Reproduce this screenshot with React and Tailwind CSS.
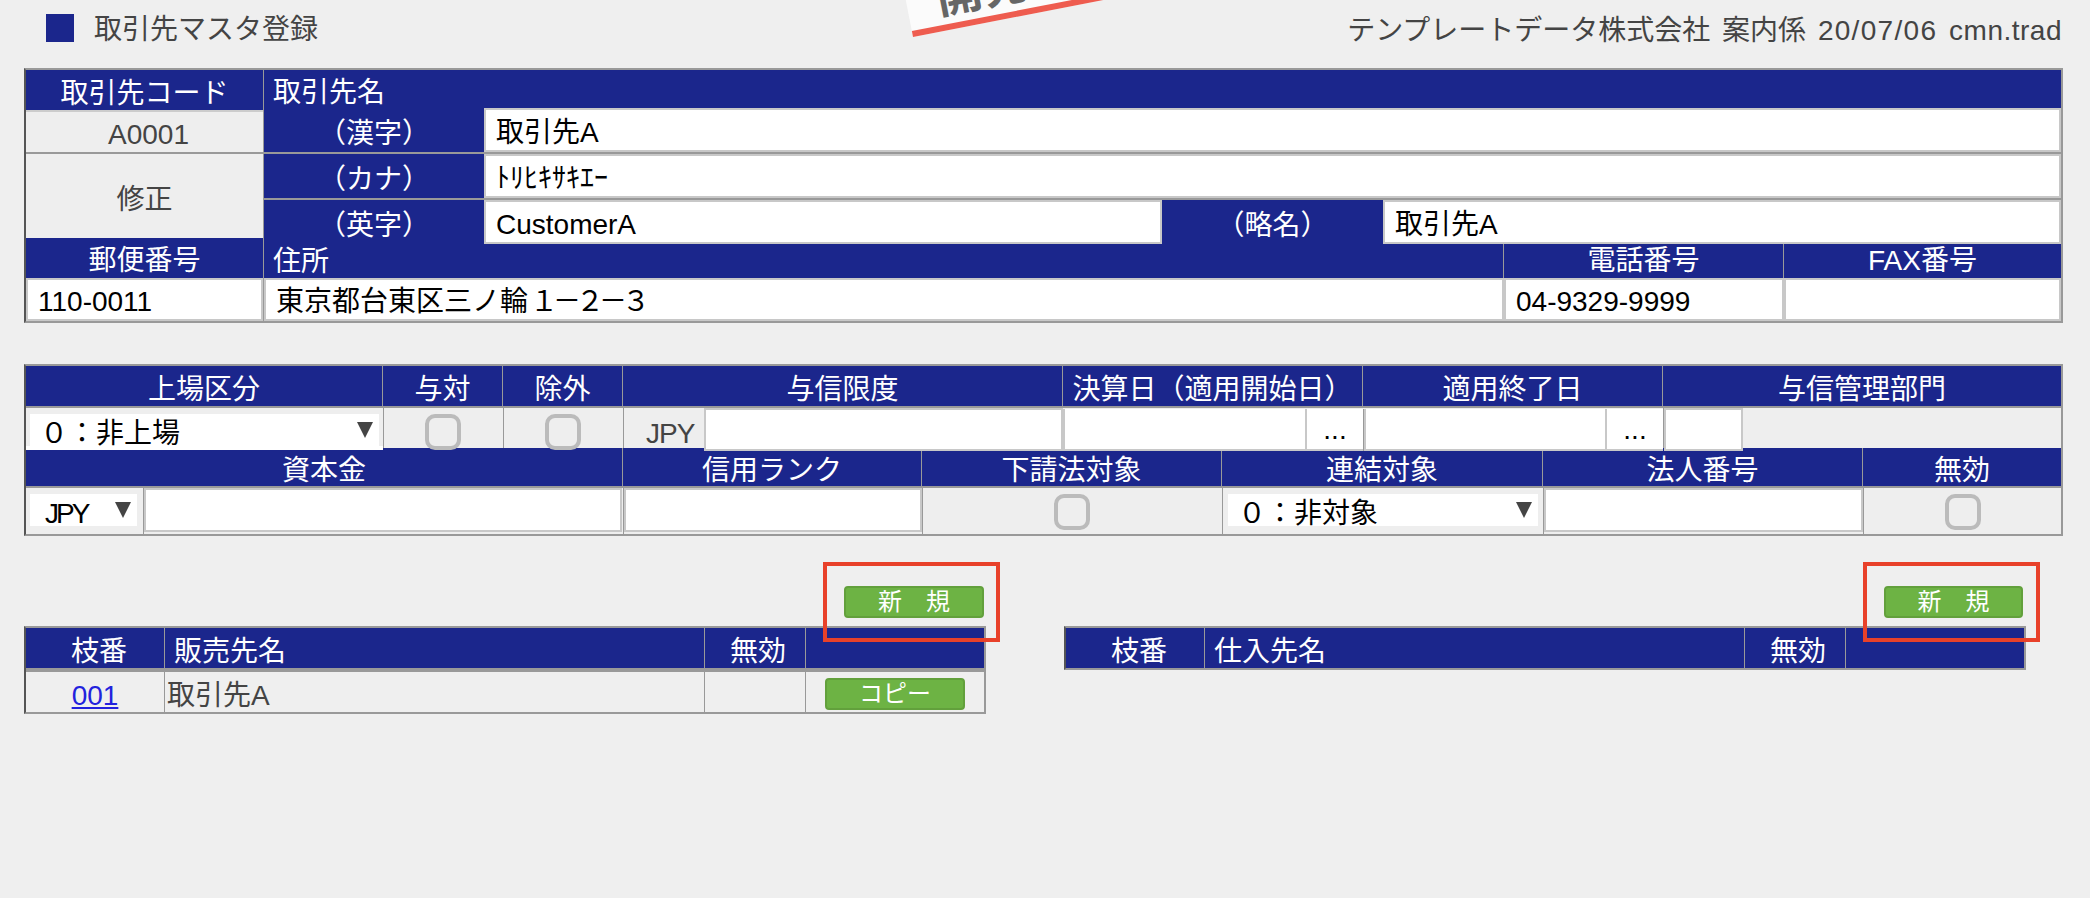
function Head({ className = '', top = 'pt-[7px]', children }) {
    return (
        <div className={`flex items-center justify-center bg-[#1b268c] text-white border-r border-[#999] ${top} ${className}`}>
            {children}
        </div>
    );
}

function Box({ className = '', children }) {
    return (
        <div className={`relative z-10 flex items-center bg-white border-2 border-[#c8c8c8] text-black pl-[10px] pt-[5px] whitespace-nowrap ${className}`}>
            {children}
        </div>
    );
}

function Pick({ className = '', children }) {
    return (
        <div className={`flex items-center justify-between bg-white h-[32px] text-black ${className}`}>
            <span className="whitespace-nowrap pt-[7px]">{children}</span>
            <svg width="16" height="16" viewBox="0 0 16 16" className="mr-[6px] mb-[1px]">
                <polygon points="0,0 16,0 8,16" fill="#444" />
            </svg>
        </div>
    );
}

function Check({ className = '' }) {
    return <div className={`relative z-10 w-[36px] h-[36px] mr-[2px] rounded-[10px] border-4 border-[#bbb] bg-[#eee] ${className}`}></div>;
}

function DateBox({ width }) {
    return (
        <div className={`relative z-10 flex h-[42px] mt-[1px] ${width}`}>
            <div className="flex-1 bg-white border-l-2 border-b-2 border-r-2 border-[#c8c8c8]"></div>
            <div className="w-[56px] flex items-end justify-center bg-white border-b-2 border-[#c8c8c8] text-black text-[28px] leading-none pb-[5px]">...</div>
        </div>
    );
}

function GreenButton({ label, outlined, className = '' }) {
    return (
        <div className={`relative flex items-center justify-center h-[32px] rounded-[4px] bg-[#6db344] border-2 border-[#62a03c] text-white text-[24px] leading-none whitespace-pre ${className}`}>
            {label}
            {/* Red annotation frame */}
            {outlined && <div className="absolute -left-[23px] -top-[26px] w-[177px] h-[80px] border-4 border-[#e8412a]"></div>}
        </div>
    );
}

function App() {
    return (
        <div className="relative w-[2090px] h-[898px] overflow-hidden bg-[#efefef] text-[#444] text-[28px] leading-none font-['Liberation_Sans','Noto_Sans_CJK_JP',sans-serif]">

            {/* Stamp cut off by the top of the page */}
            <div className="absolute left-[913px] -top-[43px] w-[240px] h-[80px] origin-bottom-left -rotate-[11deg] bg-[#fbfbfb] border-b-[6px] border-[#ee5c4f] pl-[30px] pt-[24px] text-[#666] text-[46px] font-bold whitespace-nowrap">
                開発環境
            </div>

            {/* Title bar */}
            <div className="flex items-center justify-between h-[68px] pl-[46px] pr-[28px] pb-[12px]">
                <div className="flex items-center gap-[20px]">
                    <div className="w-[28px] h-[28px] bg-[#1b268c]"></div>
                    <span className="pt-[3px]">取引先マスタ登録</span>
                </div>
                <span className="whitespace-pre mt-[6px] [word-spacing:4px]">テンプレートデータ株式会社 案内係 <span className="tracking-[1.3px]">20/07/06</span> <span className="tracking-[0.5px]">cmn.trad</span></span>
            </div>

            {/* Customer name and address */}
            <div className="flex ml-[24px] w-[2039px] h-[255px] border-t-2 border-b-2 border-l-2 border-r-2 border-t-[#999] border-b-[#999] border-r-[#999] border-l-[#555]">
                <div className="flex flex-col w-[238px] shrink-0 border-r border-[#999]">
                    <div className="flex items-center justify-center h-[40px] pt-[7px] bg-[#1b268c] text-white">取引先コード</div>
                    <div className="flex items-center justify-center h-[44px] pl-[8px] pt-[5px] border-t-2 border-t-[#ccc] border-b-2 border-b-[#999] bg-[#eee]">A0001</div>
                    <div className="flex items-center justify-center h-[84px] pt-[8px] bg-[#eee]">修正</div>
                    <div className="flex items-center justify-center h-[40px] pt-[5px] bg-[#1b268c] text-white">郵便番号</div>
                    <div className="flex items-center flex-1 pl-[10px] pt-[5px] bg-white border-2 border-[#c8c8c8] text-black">110-0011</div>
                </div>
                <div className="flex flex-col flex-1">
                    <div className="flex items-center h-[38px] pl-[9px] pt-[7px] bg-[#1b268c] text-white">取引先名</div>
                    <div className="flex h-[46px] border-b-2 border-[#999]">
                        <Head className="w-[220px] border-r-0">（漢字）</Head>
                        <Box className="flex-1">取引先A</Box>
                    </div>
                    <div className="flex h-[46px] border-b-2 border-[#999]">
                        <Head className="w-[220px] border-r-0">（カナ）</Head>
                        <Box className="flex-1">ﾄﾘﾋｷｻｷｴｰ</Box>
                    </div>
                    <div className="flex h-[44px]">
                        <Head className="w-[220px] border-r-0">（英字）</Head>
                        <Box className="w-[678px]">CustomerA</Box>
                        <Head className="w-[221px] border-r-0">（略名）</Head>
                        <Box className="flex-1">取引先A</Box>
                    </div>
                    <div className="flex h-[34px]">
                        <div className="flex items-center w-[1240px] pl-[9px] pt-[2px] bg-[#1b268c] text-white border-r border-[#999]">住所</div>
                        <Head top="pt-0" className="w-[280px]">電話番号</Head>
                        <Head top="pt-0" className="flex-1 border-r-0">FAX番号</Head>
                    </div>
                    <div className="flex flex-1">
                        <Box className="w-[1240px]">東京都台東区三ノ輪<span className="tracking-[-5px] ml-[2px]">１－２－３</span></Box>
                        <Box className="w-[280px]">04-9329-9999</Box>
                        <Box className="flex-1"></Box>
                    </div>
                </div>
            </div>

            {/* Credit and capital */}
            <div className="ml-[24px] mt-[41px] w-[2039px] h-[172px] border-t-2 border-b-2 border-l-2 border-r-2 border-t-[#999] border-b-[#999] border-r-[#999] border-l-[#555]">
                <div className="flex h-[40px]">
                    <Head className="w-[357px]">上場区分</Head>
                    <Head className="w-[120px]">与対</Head>
                    <Head className="w-[120px]">除外</Head>
                    <Head className="w-[440px]">与信限度</Head>
                    <Head className="w-[300px]">決算日（適用開始日）</Head>
                    <Head className="w-[300px]">適用終了日</Head>
                    <Head className="flex-1 border-r-0">与信管理部門</Head>
                </div>
                <div className="flex h-[42px] border-t-2 border-[#999] bg-[#eee]">
                    <div className="relative z-10 flex flex-col h-[42px] w-[357px] pt-[6px]">
                        <div className="px-[4px]">
                            <Pick className="pl-[10px]">０：非上場</Pick>
                        </div>
                        <div className="h-[4px] bg-white"></div>
                    </div>
                    <div className="flex justify-center w-[120px] pt-[6px] border-l border-[#999]"><Check /></div>
                    <div className="flex justify-center w-[120px] pt-[6px] border-l border-[#999]"><Check /></div>
                    <div className="flex w-[440px] border-l border-[#999]">
                        <span className="w-[80px] pt-[12px] pl-[22px] tracking-[-1px]">JPY</span>
                        <Box className="flex-1 h-[43px]"></Box>
                    </div>
                    <DateBox width="w-[300px]" />
                    <DateBox width="w-[300px] border-l border-[#999]" />
                    <div className="flex flex-1 border-l border-[#999]">
                        <Box className="w-[79px] h-[43px]"></Box>
                    </div>
                </div>
                <div className="flex h-[38px]">
                    <Head className="w-[597px]">資本金</Head>
                    <Head className="w-[299px]">信用ランク</Head>
                    <Head className="w-[300px]">下請法対象</Head>
                    <Head className="w-[321px]">連結対象</Head>
                    <Head className="w-[320px]">法人番号</Head>
                    <Head className="flex-1 border-r-0">無効</Head>
                </div>
                <div className="flex h-[48px] border-t-2 border-[#999] bg-[#eee]">
                    <div className="flex w-[597px]">
                        <div className="w-[118px] pl-[4px] pr-[6px] pt-[6px] border-r border-[#999]">
                            <Pick className="pl-[15px] tracking-[-3px]">JPY</Pick>
                        </div>
                        <Box className="flex-1 h-[44px] mr-[1px]"></Box>
                    </div>
                    <div className="w-[299px] border-l border-[#999]">
                        <Box className="h-[44px]"></Box>
                    </div>
                    <div className="flex justify-center w-[300px] pt-[6px] border-l border-[#999]"><Check /></div>
                    <div className="w-[321px] px-[5px] pt-[6px] border-l border-[#999]">
                        <Pick className="pl-[10px]">０：非対象</Pick>
                    </div>
                    <div className="w-[320px] border-l border-[#999]">
                        <Box className="h-[44px]"></Box>
                    </div>
                    <div className="flex justify-center flex-1 pt-[6px] border-l border-[#999]"><Check className="ml-[2px]" /></div>
                </div>
            </div>

            {/* Branch lists */}
            <div className="flex gap-[78px] ml-[24px] mt-[50px]">
                <div className="w-[962px]">
                    <div className="flex justify-end pr-[2px] mb-[8px]">
                        <GreenButton label="新　規" outlined className="w-[140px]" />
                    </div>
                    <div className="border-t-2 border-l-2 border-r-2 border-b-2 border-t-[#999] border-r-[#999] border-b-[#999] border-l-[#555]">
                        <div className="flex h-[40px] border-b-0">
                            <Head className="w-[139px] pl-[8px]">枝番</Head>
                            <div className="flex items-center w-[540px] pl-[9px] pt-[7px] bg-[#1b268c] text-white border-r border-[#999]">販売先名</div>
                            <Head className="w-[101px] pl-[6px]">無効</Head>
                            <Head className="flex-1 border-r-0"></Head>
                        </div>
                        <div className="flex h-[44px] border-t-4 border-[#999]">
                            <div className="flex items-center justify-center w-[139px] pt-[7px] border-r border-[#999]">
                                <a href="#" className="text-[#2222dd] underline">001</a>
                            </div>
                            <div className="flex items-center w-[540px] pl-[2px] pt-[8px] border-r border-[#999]">取引先A</div>
                            <div className="w-[101px] border-r border-[#999]"></div>
                            <div className="flex justify-center flex-1 pt-[6px]">
                                <GreenButton label="コピー" className="w-[140px]" />
                            </div>
                        </div>
                    </div>
                </div>
                <div className="w-[962px]">
                    <div className="flex justify-end pr-[3px] mb-[8px]">
                        <GreenButton label="新　規" outlined className="w-[139px]" />
                    </div>
                    <div className="border-t-2 border-l-2 border-r-2 border-b-2 border-t-[#999] border-r-[#999] border-b-[#999] border-l-[#555]">
                        <div className="flex h-[40px]">
                            <Head className="w-[139px] pl-[8px]">枝番</Head>
                            <div className="flex items-center w-[540px] pl-[9px] pt-[7px] bg-[#1b268c] text-white border-r border-[#999]">仕入先名</div>
                            <Head className="w-[101px] pl-[6px]">無効</Head>
                            <Head className="flex-1 border-r-0"></Head>
                        </div>
                    </div>
                </div>
            </div>
        </div>
    );
}

export default App;
